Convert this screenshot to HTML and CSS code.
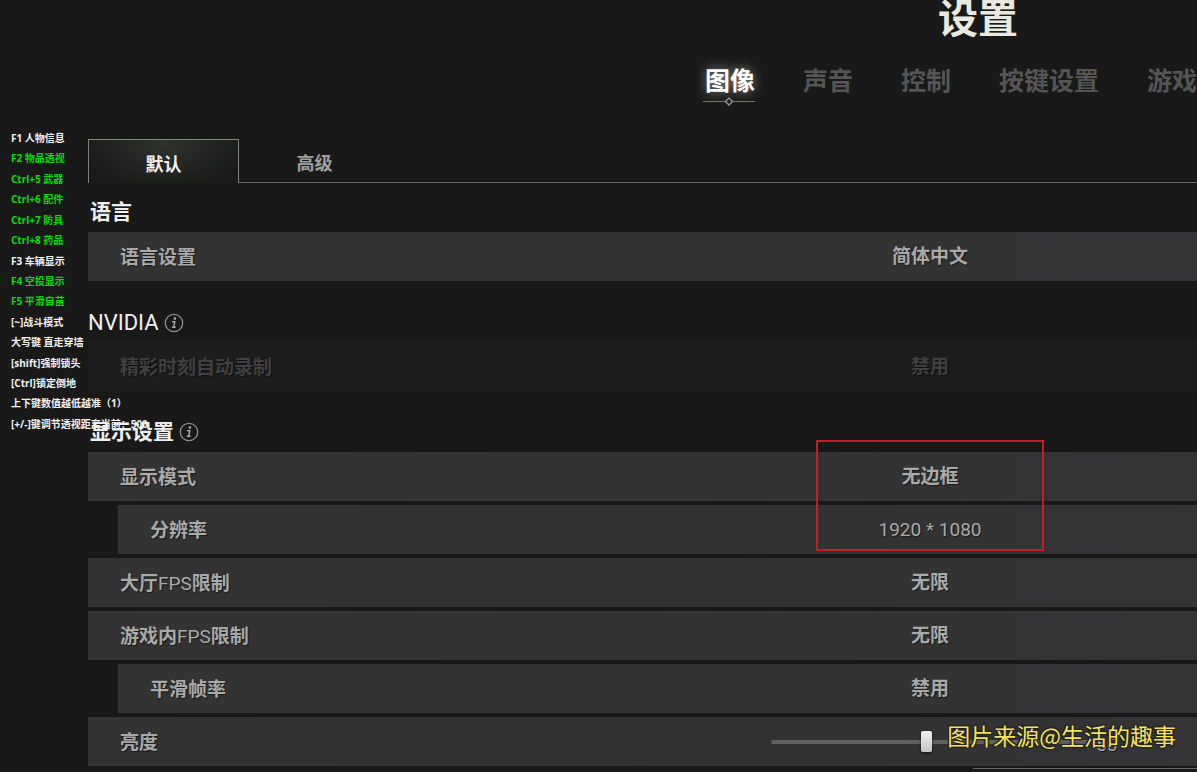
FILE: index.html
```html
<!DOCTYPE html>
<html lang="zh-CN">
<head>
  <meta charset="UTF-8">
  <meta name="viewport" content="width=device-width, initial-scale=1.0">
  <title>设置</title>
  <link rel="stylesheet" href="styles.css">
</head>
<body>

  <header class="header">
    <h1 class="header-title">设置</h1>
    <nav class="nav">
      <a class="nav-active" href="#video">图像
        <svg class="nav-mark" viewBox="0 0 52 9" width="52" height="9" fill="none" stroke="#77776f">
          <path d="M0 4.5H22M30 4.5H52"/>
          <path d="M26 1L29.5 4.5L26 8L22.5 4.5Z" stroke="#96968f" stroke-width="1.4"/>
        </svg>
      </a>
      <a href="#audio">声音</a>
      <a href="#control">控制</a>
      <a href="#keys">按键设置</a>
      <a href="#game">游戏</a>
    </nav>
  </header>

  <main class="panel">
    <div class="tabs">
      <button class="tab tab-active" type="button">默认</button>
      <button class="tab" type="button">高级</button>
    </div>

    <section class="group">
      <h2 class="group-title">语言</h2>
      <div class="row">
        <label for="language">语言设置</label>
        <select id="language"><option>简体中文</option></select>
      </div>
    </section>

    <section class="group">
      <h2 class="group-title group-title-latin">NVIDIA
        <svg class="info" viewBox="0 0 20 20" width="20" height="20">
          <circle cx="10" cy="10" r="8.7" fill="none" stroke="#8d8d8d" stroke-width="1.3"/>
          <circle cx="10.9" cy="5.6" r="1.3" fill="#a8a8a8"/>
          <path d="M8 8.7H10.8L9.7 14.2H11.6M7.8 14.3H9.7" fill="none" stroke="#a8a8a8" stroke-width="1.5"/>
        </svg>
      </h2>
      <div class="row row-disabled">
        <label for="highlight">精彩时刻自动录制</label>
        <select id="highlight" disabled><option>禁用</option></select>
      </div>
    </section>

    <section class="group">
      <h2 class="group-title">显示设置
        <svg class="info" viewBox="0 0 20 20" width="20" height="20">
          <circle cx="10" cy="10" r="8.7" fill="none" stroke="#8d8d8d" stroke-width="1.3"/>
          <circle cx="10.9" cy="5.6" r="1.3" fill="#a8a8a8"/>
          <path d="M8 8.7H10.8L9.7 14.2H11.6M7.8 14.3H9.7" fill="none" stroke="#a8a8a8" stroke-width="1.5"/>
        </svg>
      </h2>
      <div class="row">
        <label for="mode">显示模式</label>
        <select id="mode"><option>无边框</option></select>
      </div>
      <div class="row row-sub">
        <label for="resolution">分辨率</label>
        <select id="resolution" class="number"><option>1920 * 1080</option></select>
      </div>
      <div class="row">
        <label for="lobby-fps">大厅<span class="latin">FPS</span>限制</label>
        <select id="lobby-fps"><option>无限</option></select>
      </div>
      <div class="row">
        <label for="game-fps">游戏内<span class="latin">FPS</span>限制</label>
        <select id="game-fps"><option>无限</option></select>
      </div>
      <div class="row row-sub">
        <label for="smooth">平滑帧率</label>
        <select id="smooth"><option>禁用</option></select>
      </div>
      <div class="row">
        <label for="brightness">亮度</label>
        <input id="brightness" type="range" min="0" max="100" value="49">
        <output class="number" for="brightness">50</output>
      </div>
      <div class="highlight-box"></div>
    </section>
    <div class="panel-end"></div>
  </main>

  <ul class="hotkeys">
    <li>F1 人物信息</li>
    <li class="on">F2 物品透视</li>
    <li class="on">Ctrl+5 武器</li>
    <li class="on">Ctrl+6 配件</li>
    <li class="on">Ctrl+7 防具</li>
    <li class="on">Ctrl+8 药品</li>
    <li>F3 车辆显示</li>
    <li class="on">F4 空投显示</li>
    <li class="on">F5 平滑自苗</li>
    <li>[~]战斗模式</li>
    <li>大写键 直走穿墙</li>
    <li>[shift]强制锁头</li>
    <li>[Ctrl]锁定倒地</li>
    <li>上下键数值越低越准（1）</li>
    <li>[+/-]键调节透视距离当前：500</li>
  </ul>

  <div class="credit">图片来源@生活的趣事</div>

</body>
</html>
```
FILE: styles.css
```css
* {
  box-sizing: border-box;
}

body {
  margin: 0;
  min-height: 100vh;
  position: relative;
  overflow: hidden;
  background: #19191a;
  color: #a9a9a9;
  font-family: Roboto, "Noto Sans CJK SC", sans-serif;
  font-size: 19px;
}

h1, h2, ul {
  margin: 0;
  padding: 0;
}

.header {
  display: flex;
  flex-direction: column;
  align-items: flex-end;
}

.header-title {
  padding-right: 179px;
  font-size: 40px;
  line-height: 40px;
  font-weight: 700;
  color: #e9e9e0;
}

.nav {
  display: flex;
  gap: 48px;
  margin-top: 22px;
}

.nav a {
  position: relative;
  font-size: 25px;
  line-height: 40px;
  font-weight: 700;
  color: #555;
  text-decoration: none;
  white-space: nowrap;
}

.nav .nav-active {
  color: #fff;
  text-shadow: 0 0 12px rgba(255, 255, 255, 0.5);
}

.nav-mark {
  position: absolute;
  left: -2px;
  bottom: -4px;
}

.panel {
  margin: 37px 0 0 88px;
}

.tabs {
  display: flex;
}

.tabs::after {
  content: "";
  flex: 1;
  border-bottom: 1px solid #666;
}

.tab {
  width: 151px;
  height: 44px;
  padding: 3px 0 0;
  border: 0;
  border-bottom: 1px solid #666;
  background: none;
  color: #a0a0a0;
  font-family: inherit;
  font-size: 18px;
  font-weight: 700;
}

.tab-active {
  border: 1px solid #80807c;
  border-bottom: 0;
  background: radial-gradient(ellipse at 50% 0, #30332d, #191a19 85%);
  color: #f0f0f0;
}

.group {
  position: relative;
  display: flex;
  flex-direction: column;
  gap: 4px;
  padding-top: 23px;
}

.tabs + .group {
  padding-top: 11px;
}

.group-title {
  display: flex;
  align-items: center;
  gap: 5px;
  height: 38px;
  margin-bottom: -4px;
  padding: 0 0 2px 2px;
  font-size: 21px;
  line-height: 34px;
  font-weight: 700;
  color: #efefef;
}

.group-title-latin {
  padding: 0;
  font-size: 22px;
  font-weight: 400;
}

.row {
  display: grid;
  grid-template-columns: 1fr 318px 108px;
  align-items: center;
  height: 49px;
  padding-left: 32px;
  background: linear-gradient(90deg, #333334, #323232 60%, #343436);
  font-weight: 700;
  text-shadow: 1px 1px 1px rgba(0, 0, 0, 0.5);
}

.row-sub {
  margin-left: 30px;
}

.row-disabled {
  background: #1d1d1e;
  color: #404040;
}

.row label {
  padding-bottom: 2px;
}

.latin {
  font-weight: 400;
}

.row select {
  appearance: none;
  width: 100%;
  height: 100%;
  padding: 0;
  border: 0;
  background: none;
  color: inherit;
  font: inherit;
  text-align: center;
  text-align-last: center;
  text-shadow: inherit;
  opacity: 1;
}

.row .number {
  font-weight: 400;
}

.row output {
  padding: 6px 0 0 7px;
}

.row input {
  appearance: none;
  width: 100%;
  height: 24px;
  margin: 0;
  background: none;
}

.row input::-webkit-slider-runnable-track {
  height: 4px;
  border-radius: 2px;
  background: #606060;
}

.row input::-webkit-slider-thumb {
  appearance: none;
  width: 11px;
  height: 21px;
  margin-top: -9px;
  border-radius: 2px;
  background: linear-gradient(#f0f0f0, #c4c4c4);
  box-shadow: 0 1px 3px rgba(0, 0, 0, 0.7);
}

.highlight-box {
  position: absolute;
  top: 49px;
  right: 153px;
  width: 228px;
  height: 111px;
  border: 2px solid #c51d24;
  pointer-events: none;
}

.panel-end {
  width: 224px;
  height: 1px;
  margin: 2px 0 0 auto;
  background: #666;
}

/* overlay */
.hotkeys {
  position: absolute;
  top: 128px;
  left: 11px;
  display: flex;
  flex-direction: column;
  justify-content: space-between;
  height: 306px;
  list-style: none;
  font-family: "Open Sans", "Noto Sans CJK SC", sans-serif;
  font-size: 10px;
  line-height: 20px;
  font-weight: 700;
  color: #f2f2f2;
  white-space: nowrap;
}

.hotkeys .on {
  color: #05dc05;
}

.credit {
  position: absolute;
  right: 21px;
  bottom: 20px;
  font-family: "Noto Sans CJK SC", sans-serif;
  font-size: 23px;
  line-height: 34px;
  color: #f7e05a;
  text-shadow: 1px 1px 1px #222, -1px -1px 1px #222, 1px -1px 1px #222, -1px 1px 1px #222;
}
```
